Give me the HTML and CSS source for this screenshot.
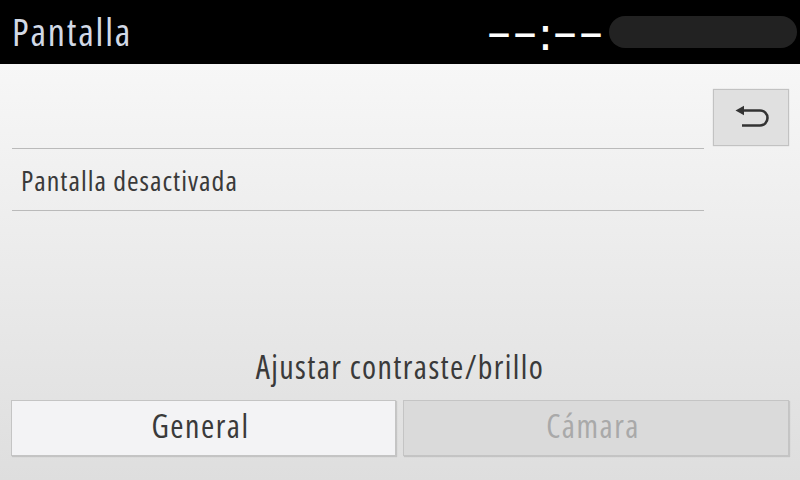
FILE: index.html
```html
<!DOCTYPE html>
<html lang="es">
<head>
<meta charset="utf-8">
<title>Pantalla</title>
<link rel="stylesheet" href="styles.css">
</head>
<body>
<div class="screen">
  <header class="topbar">
    <h1 class="title">Pantalla</h1>
    <div class="status">
      <div class="clock"><span class="dash">–</span><span class="dash gap">–</span><span class="colon">:</span><span class="dash">–</span><span class="dash last">–</span></div>
      <div class="pill"></div>
    </div>
  </header>
  <main class="content">
    <div class="top">
      <ul class="list">
        <li class="item empty"></li>
        <li class="item">Pantalla desactivada</li>
      </ul>
      <button class="back" type="button" aria-label="Atrás">
        <svg class="back-icon" viewBox="0 0 74 55" width="74" height="55">
          <path d="M29 20.5 H46 A7.5 7.5 0 0 1 46 35.5 H28" fill="none" stroke="#333" stroke-width="2.6"/>
          <polygon points="21.5,20.5 30,15.8 30,25.2" fill="#333"/>
        </svg>
      </button>
    </div>
    <div class="spacer"></div>
    <div class="label">Ajustar contraste/brillo</div>
    <div class="tabs">
      <button class="tab active" type="button">General</button>
      <button class="tab disabled" type="button">Cámara</button>
    </div>
  </main>
</div>
</body>
</html>
```

FILE: styles.css
```css
* { box-sizing: border-box; }
html, body {
  margin: 0;
  padding: 0;
  width: 800px;
  height: 480px;
  overflow: hidden;
  background: #000;
}
body {
  font-family: "Open Sans", sans-serif;
  font-stretch: 75%;
}
.screen {
  width: 800px;
  height: 480px;
  display: flex;
  flex-direction: column;
}
.topbar {
  height: 64px;
  flex: 0 0 64px;
  background: #000;
  display: flex;
  align-items: center;
  justify-content: space-between;
}
.title {
  margin: 0 0 2px 12px;
  font-size: 38px;
  font-weight: normal;
  letter-spacing: 1.8px;
  color: #d2d9e6;
}
.status {
  display: flex;
  align-items: center;
  height: 64px;
  margin-right: 3px;
}
.clock {
  display: flex;
  align-items: flex-start;
  height: 64px;
  color: #fff;
  font-family: "DejaVu Sans", sans-serif;
  font-stretch: normal;
  margin-right: 9px;
}
.dash {
  font-size: 48px;
  line-height: 1;
  height: 48px;
  width: 18px;
  display: flex;
  justify-content: center;
  margin-top: 8px;
  margin-right: 8px;
}
.dash.gap { margin-right: 9px; }
.dash.last { margin-right: 0; }
.colon {
  font-size: 47px;
  line-height: 1;
  height: 47px;
  width: 5px;
  display: flex;
  justify-content: center;
  margin-top: 10px;
  margin-right: 8px;
}
.pill {
  width: 188px;
  height: 32px;
  border-radius: 16px;
  background: #222;
}
.content {
  flex: 1;
  background: linear-gradient(#f7f7f7, #dedede);
  display: flex;
  flex-direction: column;
  padding-bottom: 24px;
}
.top {
  display: flex;
  align-items: flex-start;
}
.list {
  list-style: none;
  margin: 0 0 0 12px;
  padding: 0;
  width: 692px;
}
.item {
  height: 62px;
  border-bottom: 1px solid #bababa;
  display: flex;
  align-items: center;
  padding-left: 9px;
  font-size: 28px;
  letter-spacing: 1px;
  color: #3a3a3a;
}
.item.empty { height: 85px; }
.back {
  margin: 25px 0 0 9px;
  width: 76px;
  height: 57px;
  padding: 0;
  background: #e0e0e0;
  border: 1px solid #c2c2c2;
  box-shadow: 0 0 1px rgba(0,0,0,0.2);
  display: block;
}
.back-icon { display: block; }
.spacer { flex: 1; }
.label {
  text-align: center;
  font-size: 32px;
  line-height: 34px;
  letter-spacing: 1.4px;
  color: #3a3a3a;
  margin-bottom: 16px;
}
.tabs {
  display: flex;
  gap: 7px;
  padding: 0 11px 0 11px;
}
.tab {
  height: 56px;
  font-family: inherit;
  font-stretch: inherit;
  font-size: 32px;
  letter-spacing: 1.5px;
  border: 1px solid #c4c4c4;
  box-shadow: 1px 1px 1px rgba(0,0,0,0.12);
  padding: 0 6px 5px 0;
}
.tab.active {
  width: 385px;
  background: #f3f3f5;
  color: #3a3a3a;
}
.tab.disabled {
  width: 386px;
  background: #dadada;
  color: #a9a9a9;
}
```
